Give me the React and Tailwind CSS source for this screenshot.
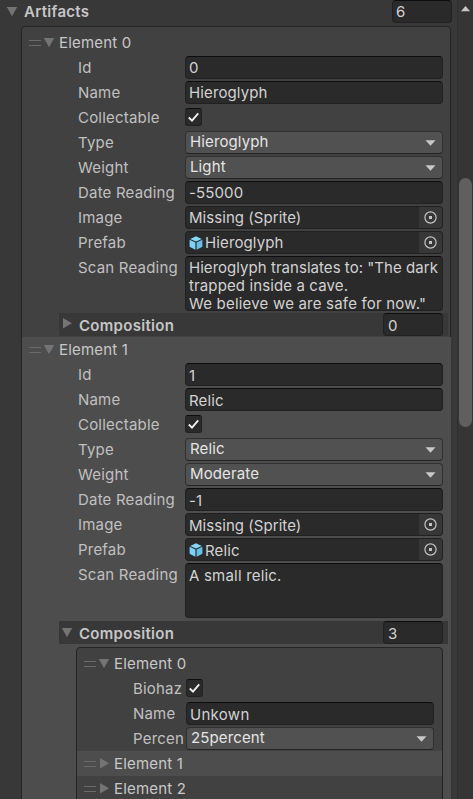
import React from "react";

const fieldBase =
  "h-[23px] rounded-[4px] border border-[#212121] border-t-[#0d0d0d] bg-[#2a2a2a] text-[#d2d2d2] flex items-center overflow-hidden whitespace-nowrap";

function Down({ className = "" }) {
  return (
    <svg className={`shrink-0 ${className}`} width="11" height="10" viewBox="0 0 11 10">
      <path d="M-0.2 0H10.2L5 9.2Z" fill="#747474" />
    </svg>
  );
}

function Right({ className = "" }) {
  return (
    <svg className={`shrink-0 ${className}`} width="10" height="11" viewBox="0 0 10 11">
      <path d="M0 0V10.4L9 5.2Z" fill="#747474" />
    </svg>
  );
}

function Handle() {
  return (
    <span className="flex h-[6px] w-3 shrink-0 flex-col justify-between">
      <span className="h-px bg-[#6a6a6a]" />
      <span className="h-px bg-[#6a6a6a]" />
    </span>
  );
}

function Row({ label, children, nested = false, tall = false }) {
  return (
    <div className={`flex items-start ${tall ? "h-[57px]" : "h-[25px]"}`}>
      <div
        className={`ml-[56px] h-[23px] shrink-0 overflow-hidden leading-[24px] tracking-[0.2px] whitespace-nowrap text-[#c0c0c0] ${
          nested ? "w-[53px]" : "w-[107px]"
        }`}
      >
        {label}
      </div>
      {children}
    </div>
  );
}

function Text({ children, nested = false, low = false }) {
  return (
    <div
      className={`${fieldBase} pl-[3px] ${nested ? "w-[248px] tracking-[0.3px]" : "w-[258px]"} ${
        low ? "pt-[3px]" : nested ? "pt-[2px]" : "pt-px"
      }`}
    >
      {children}
    </div>
  );
}

function Select({ children, nested = false }) {
  return (
    <div
      className={`flex h-[23px] items-center justify-between rounded-[4px] border border-[#303030] border-b-[#242424] bg-[#515151] pr-[6px] pb-px pl-1 text-[#e4e4e4] ${
        nested ? "w-[248px]" : "w-[258px]"
      }`}
    >
      <span>{children}</span>
      <svg className="mt-px" width="11" height="6" viewBox="0 0 11 6">
        <path d="M0.5 0.3H10.5L5.5 5.8Z" fill="#c8c8c8" />
      </svg>
    </div>
  );
}

function Check() {
  return (
    <div className="mt-[2px] h-[18px] w-[17px] rounded-[3px] border border-[#212121] border-t-[#0d0d0d] bg-[#2a2a2a]">
      <svg width="15" height="16" viewBox="0 0 15 16">
        <path d="M2.8 8.5L6 11.6L12.2 4.4" fill="none" stroke="#eee" strokeWidth="1.9" />
      </svg>
    </div>
  );
}

function Cube() {
  return (
    <svg className="mr-[2px] shrink-0" width="14" height="14" viewBox="0 0 14 14">
      <path d="M7 0.2L12.8 2.9L7 5.6L1.2 2.9Z" fill="#84d7fb" />
      <path d="M0.6 3.8L6.4 6.5V13.7L0.6 10.7Z" fill="#7bd3fa" />
      <path d="M13.4 3.8L7.6 6.5V13.7L13.4 10.7Z" fill="#66bfe9" />
    </svg>
  );
}

function ObjectField({ children, cube = false, low = false }) {
  return (
    <div className={`${fieldBase} w-[258px] border-t-[#202020] pl-[3px]`}>
      {cube && <Cube />}
      <span className={`flex-1 ${low ? "pt-[3px]" : "pt-px"} ${cube ? "" : "tracking-[0.05px]"}`}>
        {children}
      </span>
      <span className="flex h-full w-[23px] items-center justify-center bg-[#373737]">
        <svg width="13" height="13" viewBox="0 0 13 13">
          <circle cx="6.5" cy="6.5" r="5.6" fill="none" stroke="#c4c4c4" strokeWidth="1.2" />
          <rect x="5" y="5" width="3" height="3" fill="#c4c4c4" />
        </svg>
      </span>
    </div>
  );
}

function Composition({ count, open = false }) {
  return (
    <div className="ml-[37px] flex h-[23px] w-[389px] items-center bg-[#383838]">
      {open ? <Down className="ml-[3px]" /> : <Right className="mb-[2px] ml-[4px]" />}
      <span className={`flex-1 pt-[2px] font-semibold tracking-[0.3px] text-[#c6c6c6] ${open ? "ml-[6px]" : "ml-[6px]"}`}>
        Composition
      </span>
      <div className={`${fieldBase} mr-[5px] w-[60px] pt-[2px] pl-1`}>{count}</div>
    </div>
  );
}

function ElementHead({ title, open = true, className = "" }) {
  return (
    <div className={`flex h-[25px] items-center text-[#c8c8c8] ${className}`}>
      <Handle />
      {open ? <Down className="ml-[3px]" /> : <Right className="ml-[4px]" />}
      <span className="ml-[4px] pt-px tracking-[0.2px]">{title}</span>
    </div>
  );
}

function Artifact({ title, id, name, weight, date, scan, low = false }) {
  return (
    <>
      <ElementHead title={title} className="mb-px pl-[7px]" />
      <Row label="Id"><Text low={low}>{id}</Text></Row>
      <Row label="Name"><Text low={low}>{name}</Text></Row>
      <Row label="Collectable"><Check /></Row>
      <Row label="Type"><Select>{name}</Select></Row>
      <Row label="Weight"><Select>{weight}</Select></Row>
      <Row label="Date Reading"><Text low={low}>{date}</Text></Row>
      <Row label="Image"><ObjectField low={low}>Missing (Sprite)</ObjectField></Row>
      <Row label="Prefab"><ObjectField cube low={low}>{name}</ObjectField></Row>
      <Row label="Scan Reading" tall>
        <div
          className={`h-[55px] w-[258px] rounded-[4px] border border-[#212121] border-t-[#0d0d0d] bg-[#2a2a2a] pl-[3px] leading-[18px] whitespace-pre text-[#d2d2d2] ${
            low ? "pt-[3px]" : "pt-[2px]"
          }`}
        >
          {scan.map((line) => (
            <p key={line} className="first:tracking-[0.04px] last:tracking-[0.2px]">{line}</p>
          ))}
        </div>
      </Row>
    </>
  );
}

export default function App() {
  return (
    <div className="flex h-[799px] w-[473px] overflow-hidden bg-[#383838] font-['Inter',sans-serif] text-[15px] leading-[20px] tracking-[0.12px]">
      <main className="w-[457px] shrink-0">
        <header className="flex h-[23px] items-center">
          <Down className="ml-[7px]" />
          <span className="ml-[6px] flex-1 pt-px font-semibold tracking-[0.3px] text-[#c6c6c6]">Artifacts</span>
          <div className={`${fieldBase} mr-[5px] w-[60px] pt-px pl-[3px]`}>6</div>
        </header>
        <section className="mt-[3px] ml-[21px] h-[780px] w-[430px] rounded-t-[4px] border border-[#242424] bg-[#414141] pt-[3px]">
          <div className="h-[307px]">
            <Artifact
              title="Element 0"
              id="0"
              name="Hieroglyph"
              weight="Light"
              date="-55000"
              scan={[
                'Hieroglyph translates to: "The dark',
                "trapped inside a cave.",
                'We believe we are safe for now."',
              ]}
            />
            <Composition count="0" />
          </div>
          <div className="-mr-px h-[470px] bg-[#4d4d4d]">
            <Artifact title="Element 1" id="1" name="Relic" weight="Moderate" date="-1" scan={["A small relic."]} low />
            <div className="h-px" />
            <Composition count="3" open />
            <div className="mt-[3px] ml-[54px] h-[160px] w-[367px] rounded-t-[4px] border border-[#242424] bg-[#414141] pt-[3px]">
              <ElementHead title="Element 0" className="mb-px pl-[7px]" />
              <Row label="Biohaz" nested><Check /></Row>
              <Row label="Name" nested><Text nested>Unkown</Text></Row>
              <Row label="Percen" nested><Select nested>25percent</Select></Row>
              <ElementHead title="Element 1" open={false} className="-mt-px bg-[#4d4d4d] pl-[7px]" />
              <ElementHead title="Element 2" open={false} className="pl-[7px]" />
            </div>
          </div>
        </section>
      </main>
      <aside className="flex w-4 flex-col items-center border-l border-[#303030] bg-[#353535]">
        <svg className="mt-[6px]" width="9" height="6" viewBox="0 0 9 6">
          <path d="M0 5.3L4.5 0L9 5.3Z" fill="#c8c8c8" />
        </svg>
        <div className="mt-[166px] h-[249px] w-[13px] rounded-full bg-[#5f5f5f]" />
      </aside>
    </div>
  );
}
